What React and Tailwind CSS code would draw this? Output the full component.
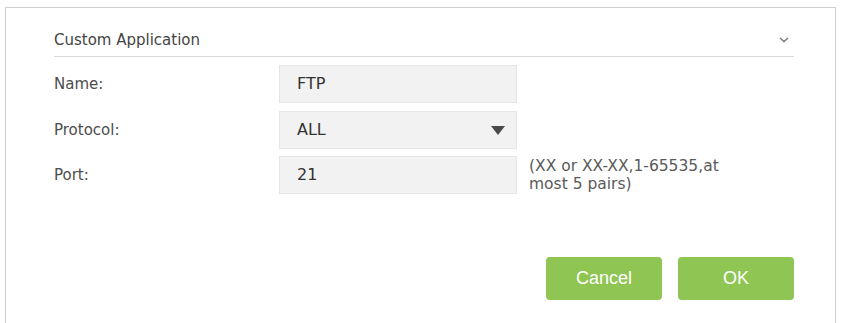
import React from "react";

const font = { fontFamily: '"DejaVu Sans", Verdana, sans-serif' };

const Row = ({ label, children, hint, className }) => (
  <div className={`flex items-center ${className}`}>
    <div className="w-[225px] text-[15px] text-[#4d4d4d]">{label}</div>
    {children}
    {hint && (
      <p className="ml-[12px] text-[15.5px] leading-[18px] text-[#5a5a5a]">
        {hint}
      </p>
    )}
  </div>
);

const Field = ({ value, select }) => (
  <div className="flex h-[38px] w-[238px] items-center justify-between border border-[#e6e6e6] bg-[#f2f2f2] pl-[17px] pr-[11px] text-[16px] text-[#333]">
    <span>{value}</span>
    {select && (
      <svg width="14" height="9" viewBox="0 0 14 9">
        <path d="M0 0 H14 L7 9 Z" fill="#4a4a4a" />
      </svg>
    )}
  </div>
);

export default function App() {
  return (
    <div className="h-[323px] overflow-hidden bg-white pl-[5px] pr-[6px] pt-[7px]" style={font}>
      <div className="h-[400px] border border-[#cfcfcf] pl-[48px] pr-[41px]">
        <div className="flex items-center justify-between border-b border-[#d9d9d9] pt-[22px] pb-[6px]">
          <span className="text-[15px] leading-[20px] text-[#444]">Custom Application</span>
          <svg width="10" height="6" viewBox="0 0 10 6" className="mr-[5px]">
            <path d="M1 1 L5 4.5 L9 1" stroke="#777" strokeWidth="1.5" fill="none" />
          </svg>
        </div>
        <Row label="Name:" className="mt-[8px]">
          <Field value="FTP" />
        </Row>
        <Row label="Protocol:" className="mt-[8px]">
          <Field value="ALL" select />
        </Row>
        <Row
          label="Port:"
          className="mt-[7px]"
          hint={
            <>
              (XX or XX-XX,1-65535,at
              <br />
              most 5 pairs)
            </>
          }
        >
          <Field value="21" />
        </Row>
        <div className="mt-[63px] flex justify-end gap-[16px]" style={{ fontFamily: '"Liberation Sans", Arial, sans-serif' }}>
          <button className="h-[43px] w-[116px] rounded-[4px] bg-[#8fc552] text-[18px] text-white">
            Cancel
          </button>
          <button className="h-[43px] w-[116px] rounded-[4px] bg-[#8fc552] text-[18px] text-white">
            OK
          </button>
        </div>
      </div>
    </div>
  );
}
